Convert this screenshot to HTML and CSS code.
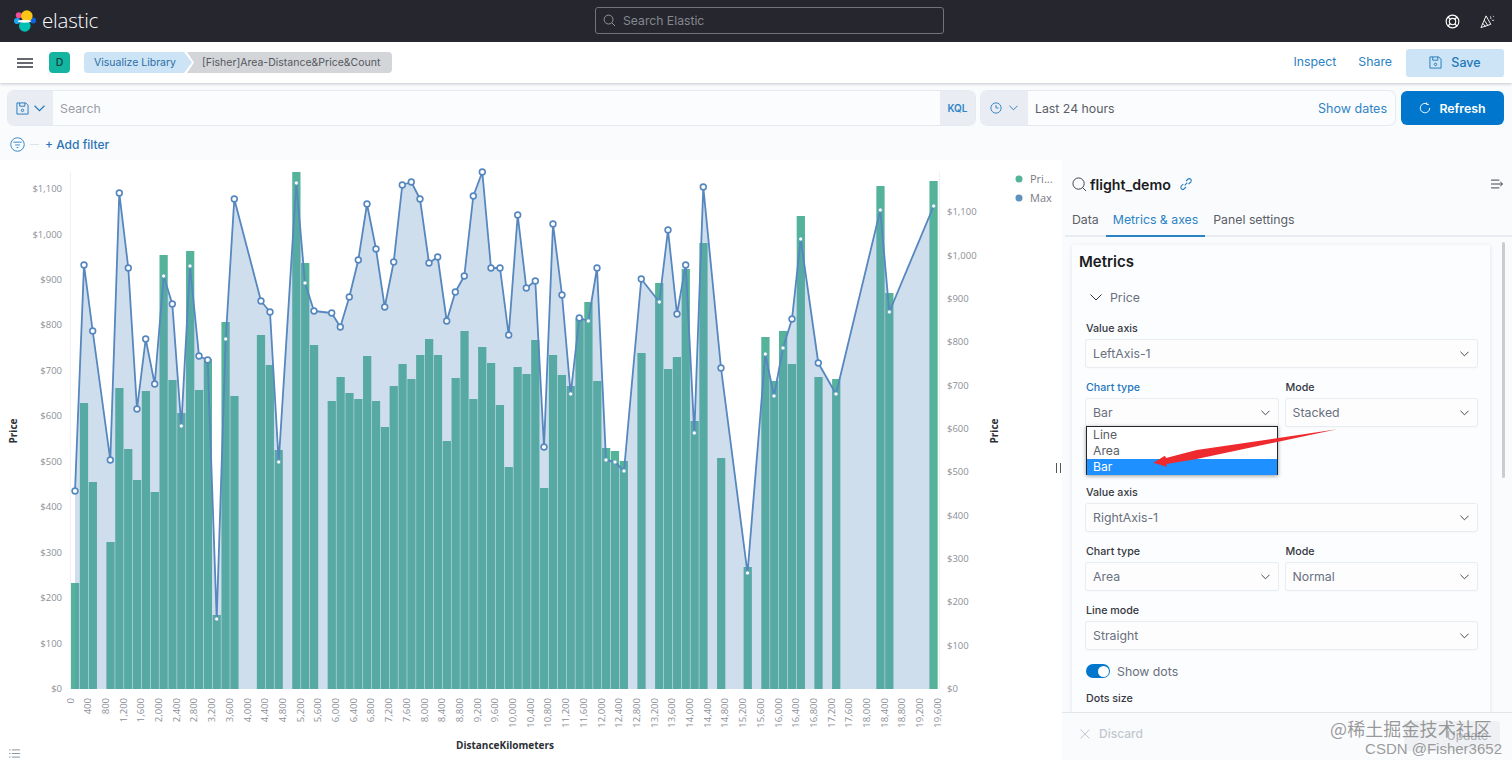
FILE: index.html
```html
<!DOCTYPE html>
<html lang="en">
<head>
<meta charset="utf-8">
<title>Visualize Library - Elastic</title>
<link rel="stylesheet" href="styles.css">
</head>
<body>
<header class="topbar">
  <div class="brand">
    <svg class="logo" viewBox="0 0 22 22" width="22" height="22">
      <circle cx="4.8" cy="5.2" r="3" fill="#f04e98"/>
      <circle cx="3" cy="11" r="3" fill="#1ba9f5"/>
      <circle cx="19" cy="10.5" r="3" fill="#0b64dd"/>
      <circle cx="10.8" cy="16" r="5.8" fill="#00bfb3"/>
      <circle cx="12.8" cy="6" r="5.8" fill="#fec514"/>
      <ellipse cx="10.5" cy="11.2" rx="6.8" ry="1.5" fill="#fff"/>
    </svg>
    <span class="wordmark">elastic</span>
  </div>
  <div class="globalsearch">
    <svg viewBox="0 0 14 14" width="13" height="13"><circle cx="6" cy="6" r="4.8" fill="none" stroke="#9a9da3"/><path d="M9.5 9.5l3.5 3.5" stroke="#9a9da3"/></svg>
    <span>Search Elastic</span>
  </div>
  <div class="topicons">
    <svg viewBox="0 0 16 16" width="15" height="15"><circle cx="8" cy="8" r="6.8" fill="none" stroke="#fff" stroke-width="1.2"/><circle cx="8" cy="8" r="3.4" fill="none" stroke="#fff" stroke-width="1.2"/><path d="M3.2 3.2l2.4 2.4M12.8 3.2l-2.4 2.4M3.2 12.8l2.4-2.4M12.8 12.8l-2.4-2.4" stroke="#fff" stroke-width="1.2"/></svg>
    <svg viewBox="0 0 16 16" width="15" height="15"><path d="M6.5 2L1 14.5 11.5 11zM4.5 6.5l4 6M3 10l3 3.5" fill="none" stroke="#fff"/><path d="M11 2.5c1 1 0 2 1 3M13 7l2-.5M14 2l.5 1" fill="none" stroke="#fff" stroke-width=".9"/></svg>
  </div>
</header>

<nav class="navbar">
  <svg class="burger" viewBox="0 0 16 10" width="16" height="10"><path d="M0 1h16M0 5h16M0 9h16" stroke="#343741" stroke-width="1.5"/></svg>
  <span class="avatar">D</span>
  <div class="crumbs">
    <span class="crumb crumb-blue">Visualize Library</span>
    <span class="crumb crumb-grey">[Fisher]Area-Distance&amp;Price&amp;Count</span>
  </div>
  <div class="navactions">
    <a class="navlink">Inspect</a>
    <a class="navlink">Share</a>
    <button class="savebtn">
      <svg viewBox="0 0 14 14" width="13" height="13"><path d="M1 1h9.5L13 3.5V13H1z M4 1v3.5h5.5V1" fill="none" stroke="#1f77bb"/><circle cx="7" cy="9" r="1.3" fill="none" stroke="#1f77bb"/></svg>
      Save
    </button>
  </div>
</nav>

<section class="querybar">
  <div class="group searchgroup">
    <div class="prepend prepend-save">
      <svg viewBox="0 0 14 14" width="13" height="13"><path d="M1 1h9.5L13 3.5V13H1z M4 1v3.5h5.5V1" fill="none" stroke="#1f77bb"/><circle cx="7" cy="9" r="1.3" fill="none" stroke="#1f77bb"/></svg>
      <svg viewBox="0 0 10 6" width="11" height="7"><path d="M.5.5L5 5 9.5.5" fill="none" stroke="#1f77bb"/></svg>
    </div>
    <span class="queryinput">Search</span>
    <span class="kql">KQL</span>
  </div>
  <div class="group timegroup">
    <div class="prepend prepend-time">
      <svg viewBox="0 0 14 14" width="12" height="12"><circle cx="7" cy="7" r="6" fill="none" stroke="#1f77bb"/><path d="M7 3.5V7h3" fill="none" stroke="#1f77bb"/></svg>
      <svg viewBox="0 0 10 6" width="9" height="6"><path d="M.5.5L5 5 9.5.5" fill="none" stroke="#1f77bb"/></svg>
    </div>
    <span class="timetext">Last 24 hours</span>
    <a class="showdates">Show dates</a>
  </div>
  <button class="refresh">
    <svg viewBox="0 0 14 14" width="12" height="12"><path d="M9.5 2.2A5.5 5.5 0 1 0 12.5 7M9 .5v2.4h2.4" fill="none" stroke="#fff" stroke-width="1.1"/></svg>
    Refresh
  </button>
</section>

<div class="filterbar">
  <svg viewBox="0 0 16 16" width="15" height="15"><circle cx="8" cy="8" r="7.2" fill="none" stroke="#2f84c6"/><path d="M3.5 5.5h9M5.5 8.5h5M7 11.2h2" stroke="#2f84c6"/></svg>
  <span class="filterdash"></span>
  <a class="addfilter">+ Add filter</a>
</div>

<main class="workspace">
  <div class="chartarea">
    <svg id="chart" class="chart" viewBox="0 160 1062 600" width="1062" height="600"></svg>
    <svg class="listicon" viewBox="0 0 12 10" width="11" height="9"><path d="M0 1h1.5M3 1h9M0 5h1.5M3 5h9M0 9h1.5M3 9h9" stroke="#7b8a99"/></svg>
    <span class="resizer"></span>
  </div>

  <aside class="panel">
    <div class="paneltitle">
      <svg viewBox="0 0 16 16" width="15" height="15"><circle cx="7" cy="7" r="6" fill="none" stroke="#343741"/><path d="M11.3 11.3l3.7 3.7" stroke="#343741"/></svg>
      <strong>flight_demo</strong>
      <svg viewBox="0 0 16 16" width="14" height="14"><path d="M6.5 9.5l3-3M5 8L2.5 10.5a2.3 2.3 0 0 0 3.2 3.2L8 11.3M8 4.7l2.4-2.4a2.3 2.3 0 0 1 3.2 3.2L11 8" fill="none" stroke="#1f77bb" stroke-width="1.2"/></svg>
      <svg class="collapse" viewBox="0 0 14 10" width="13" height="10"><path d="M0 .8h9M0 5h12M0 9.2h9M10 2.8L12.5 5 10 7.2" fill="none" stroke="#343741"/></svg>
    </div>
    <div class="tabs">
      <span class="tab">Data</span>
      <span class="tab tab-active">Metrics &amp; axes</span>
      <span class="tab">Panel settings</span>
    </div>
    <div class="panelbody">
      <div class="card">
        <h3 class="cardtitle">Metrics</h3>
        <div class="accordion">
          <svg viewBox="0 0 12 7" width="12" height="7"><path d="M.5.5L6 6 11.5.5" fill="none" stroke="#343741"/></svg>
          <span>Price</span>
        </div>
        <div class="field field-first">
          <label class="label">Value axis</label>
          <div class="select">LeftAxis-1<svg class="chev" viewBox="0 0 10 6" width="9" height="6"><path d="M.5.5L5 5 9.5.5" fill="none" stroke="#343741"/></svg></div>
        </div>
        <div class="fieldrow">
          <div class="field">
            <label class="label label-active">Chart type</label>
            <div class="select select-open">Bar<svg class="chev" viewBox="0 0 10 6" width="9" height="6"><path d="M.5.5L5 5 9.5.5" fill="none" stroke="#343741"/></svg>
              <ul class="options">
                <li>Line</li>
                <li>Area</li>
                <li class="option-on">Bar</li>
              </ul>
            </div>
          </div>
          <div class="field">
            <label class="label">Mode</label>
            <div class="select">Stacked<svg class="chev" viewBox="0 0 10 6" width="9" height="6"><path d="M.5.5L5 5 9.5.5" fill="none" stroke="#343741"/></svg></div>
          </div>
        </div>
        <div class="spacer"></div>
        <div class="field">
          <label class="label">Value axis</label>
          <div class="select">RightAxis-1<svg class="chev" viewBox="0 0 10 6" width="9" height="6"><path d="M.5.5L5 5 9.5.5" fill="none" stroke="#343741"/></svg></div>
        </div>
        <div class="fieldrow">
          <div class="field">
            <label class="label">Chart type</label>
            <div class="select">Area<svg class="chev" viewBox="0 0 10 6" width="9" height="6"><path d="M.5.5L5 5 9.5.5" fill="none" stroke="#343741"/></svg></div>
          </div>
          <div class="field">
            <label class="label">Mode</label>
            <div class="select">Normal<svg class="chev" viewBox="0 0 10 6" width="9" height="6"><path d="M.5.5L5 5 9.5.5" fill="none" stroke="#343741"/></svg></div>
          </div>
        </div>
        <div class="field">
          <label class="label">Line mode</label>
          <div class="select">Straight<svg class="chev" viewBox="0 0 10 6" width="9" height="6"><path d="M.5.5L5 5 9.5.5" fill="none" stroke="#343741"/></svg></div>
        </div>
        <div class="switchrow">
          <span class="switch"><span class="knob"></span></span>
          <span>Show dots</span>
        </div>
        <div class="field">
          <label class="label">Dots size</label>
        </div>
      </div>
      <div class="scrollthumb"></div>
    </div>
    <footer class="panelfoot">
      <span class="discard">
        <svg viewBox="0 0 10 10" width="10" height="10"><path d="M.5.5l9 9M9.5.5l-9 9" stroke="#c2c7cf"/></svg>
        Discard
      </span>
      <span class="update">Update</span>
    </footer>
  </aside>
</main>

<svg class="annotation" viewBox="0 0 200 50" width="200" height="50">
  <polygon points="185,.3 44.7,21 14,29 13,26.7 1.3,33.7 14.7,37.7 14.5,35 44.7,30" fill="#ee2a2e"/>
</svg>
<div class="watermark">
  <span class="wm-cn">@稀土掘金技术社区</span>
  <span class="wm-en">CSDN @Fisher3652</span>
</div>
<script src="chart.js"></script>
</body>
</html>
```
FILE: styles.css
```css
* { box-sizing: border-box; }
html, body { margin: 0; height: 760px; overflow: hidden; }
body {
  position: relative;
  display: flex;
  flex-direction: column;
  font-family: Inter, "Noto Sans", sans-serif;
  font-size: 12.3px;
  color: #69707d;
  background: #fafbfd;
}

.topbar {
  flex: none;
  height: 42px;
  display: grid;
  grid-template-columns: 581px 349px 1fr;
  align-items: center;
  background: #25262e;
  padding: 0 4px 0 14px;
}
.brand { display: flex; align-items: center; gap: 6px; }
.logo { display: block; }
.wordmark { font-family: "Open Sans", sans-serif; font-size: 20.5px; font-weight: 300; color: #fff; position: relative; top: -1px; letter-spacing: -.2px; }
.globalsearch {
  height: 27px;
  margin-top: -1px;
  border: 1px solid #70737a;
  border-radius: 3px;
  display: flex;
  align-items: center;
  gap: 7px;
  padding-left: 7px;
  color: #85888e;
  font-size: 12.2px;
  background: #25262e;
}
.topicons { display: flex; justify-content: flex-end; gap: 20px; padding-right: 13px; }
.topicons svg { display: block; }

.navbar {
  flex: none;
  height: 41px;
  display: flex;
  align-items: center;
  background: #fff;
  box-shadow: 0 1px 3px rgba(90, 100, 115, .35);
  padding: 0 8px 0 17px;
  position: relative;
}
.burger { flex: none; }
.avatar {
  flex: none;
  width: 21px;
  height: 21px;
  margin-left: 16px;
  border-radius: 4px;
  background: #13b5a0;
  color: #123a40;
  font-size: 10.5px;
  font-weight: 500;
  display: flex;
  align-items: center;
  justify-content: center;
}
.crumbs { display: flex; margin-left: 14px; font-size: 10.5px; }
.crumb { height: 21px; display: flex; align-items: center; }
.crumb-blue {
  background: #cce4f5;
  color: #2c6ea6;
  padding: 0 14px 0 10px;
  width: 108px;
  white-space: nowrap;
  clip-path: polygon(0 0, 100px 0, 108px 50%, 100px 100%, 0 100%);
  border-radius: 4px 0 0 4px;
}
.crumb-grey {
  background: #d3d5d9;
  color: #55585d;
  margin-left: -5px;
  padding: 0 10px 0 15px;
  width: 205px;
  white-space: nowrap;
  border-radius: 0 4px 4px 0;
  clip-path: polygon(0 0, 100% 0, 100% 100%, 0 100%, 7px 50%);
}
.navactions { margin-left: auto; display: flex; align-items: center; }
.navlink { color: #2b82c4; font-size: 12.3px; margin-right: 22px; position: relative; top: -1px; }
.navlink:nth-child(2) { margin-right: 14px; }
.savebtn {
  width: 98px;
  height: 28px;
  border: 0;
  border-radius: 3px;
  background: #cce4f5;
  color: #1f77bb;
  font: 500 12.5px Inter, sans-serif;
  display: flex;
  align-items: center;
  justify-content: center;
  gap: 9px;
}

.querybar {
  flex: none;
  margin-top: 8px;
  height: 34px;
  padding: 0 8px;
  display: flex;
  gap: 6px;
}
.group {
  display: flex;
  align-items: stretch;
  background: #fbfcfd;
  border-radius: 6px;
  box-shadow: 0 0 0 1px #e6e9ef;
  overflow: hidden;
}
.searchgroup { width: 967px; }
.timegroup { width: 414px; }
.prepend { flex: none; background: #e9edf3; display: flex; align-items: center; }
.prepend-save { width: 45px; gap: 5px; padding-left: 8px; }
.prepend-time { width: 47px; gap: 7px; padding-left: 9px; }
.queryinput { flex: 1; display: flex; align-items: center; padding-left: 7px; color: #9a9ea6; }
.kql { flex: none; width: 35px; background: #e9edf3; color: #2f84c6; font-size: 10px; font-weight: 600; display: flex; align-items: center; justify-content: center; }
.timetext { display: flex; align-items: center; padding-left: 7px; color: #5a5e66; }
.showdates { margin-left: auto; padding-right: 8px; display: flex; align-items: center; color: #2f84c6; font-size: 12.5px; }
.refresh {
  flex: none;
  width: 103px;
  border: 0;
  border-radius: 6px;
  background: #0077cc;
  color: #fff;
  font: 600 12.3px Inter, sans-serif;
  display: flex;
  align-items: center;
  justify-content: center;
  gap: 8px;
}

.filterbar { flex: none; height: 35px; padding: 3px 0 0 10px; display: flex; align-items: center; }
.filterbar svg { display: block; }
.filterdash { width: 9px; height: 1px; background: #dfe3e8; margin: 0 6px 0 5px; }
.addfilter { color: #2b74b4; font-weight: 500; font-size: 12px; }

.workspace { flex: 1; min-height: 0; display: flex; }
.chartarea { flex: none; width: 1062px; position: relative; background: #fff; }
.chart { display: block; font-family: "Open Sans", sans-serif; }
.listicon { position: absolute; left: 9px; bottom: 2px; }
.resizer { position: absolute; left: 1056px; top: 303px; width: 5px; height: 10px; border-left: 1.5px solid #555; border-right: 1.5px solid #555; }

.bar { fill: #54b399; }
.area { fill: #6092c0; fill-opacity: .3; }
.line { fill: none; stroke: #5687bf; stroke-width: 1.8; stroke-linejoin: round; }
.dot { fill: #fff; stroke: #5687bf; stroke-width: 1.6; }
.dot-small { fill: #fff; stroke: #5a9fb8; stroke-width: .8; }
.tick { font-size: 9.5px; fill: #8c9097; }
.axistitle { font-size: 10px; font-weight: 700; fill: #2c2f36; }
.axisline { stroke: #eef0f3; stroke-width: 1; }
.legendtext { font-size: 11px; fill: #777b83; }

.panel { flex: none; width: 450px; display: flex; flex-direction: column; min-height: 0; background: #fafbfd; }
.paneltitle { flex: none; height: 47px; display: flex; align-items: center; padding: 1px 8px 0 10px; gap: 3px; }
.paneltitle svg { flex: none; display: block; }
.paneltitle strong { color: #1a1c21; font-size: 14.2px; font-weight: 600; margin-right: 5px; }
.collapse { margin-left: auto; }
.tabs { flex: none; height: 30px; margin-left: 3px; display: flex; border-bottom: 2px solid #e8ecf1; }
.tab { padding: 0 7px 3px; display: flex; align-items: center; color: #5a5e66; margin-bottom: -2px; border-bottom: 2px solid transparent; }
.tab:last-child { margin-left: 1px; }
.tab-active { color: #2b82c4; border-bottom-color: #2b82c4; }
.panelbody { flex: 1; min-height: 0; overflow: hidden; display: flex; align-items: flex-start; padding: 8px 0 0 10px; }
.card {
  flex: none;
  width: 418px;
  height: 600px;
  background: #fcfdfe;
  box-shadow: 0 1px 4px rgba(100, 110, 130, .18);
  padding: 7px 13px 0 7px;
}
.cardtitle { margin: 0; color: #1a1c21; font-size: 15px; line-height: 20px; font-weight: 600; }
.accordion { height: 20px; margin-top: 15px; padding-left: 11px; display: flex; align-items: center; gap: 8px; color: #69707d; }
.accordion svg { flex: none; }
.field { margin-top: 14px; flex: 1; min-width: 0; }
.card > .field-first { margin-top: 15px; }
.fieldrow { display: flex; gap: 8px; }
.label { display: block; height: 14px; line-height: 14px; font-size: 10.7px; font-weight: 500; color: #343741; }
.label-active { color: #1f77bb; }
.card > .field, .card > .fieldrow, .spacer, .switchrow { margin-left: 7px; }
.select {
  position: relative;
  height: 27px;
  margin-top: 4px;
  padding-left: 7px;
  display: flex;
  align-items: center;
  background: #fdfdfe;
  border-radius: 2px;
  box-shadow: 0 0 0 1px #e9edf2, 0 1px 2px rgba(100, 110, 130, .1);
  color: #69707d;
}
.chev { position: absolute; right: 8px; top: 11px; }
.select-open { box-shadow: 0 0 0 1px #e9edf2; }
.options {
  position: absolute;
  z-index: 3;
  left: 0;
  right: 0;
  top: 27px;
  margin: 0;
  padding: 0;
  list-style: none;
  background: #fff;
  border: 1px solid #23262c;
  border-bottom: 0;
  box-shadow: 0 1px 4px rgba(0, 0, 0, .4);
}
.options li { height: 16px; line-height: 16px; padding-left: 6px; color: #5a5e66; font-size: 12.2px; }
.options .option-on { background: #1e90ff; color: #fff; }
.spacer { height: 46px; }
.switchrow { display: flex; align-items: center; gap: 7px; height: 14px; margin-top: 15px; color: #69707d; }
.switch { width: 24px; height: 14px; border-radius: 7px; background: #0077cc; display: block; position: relative; }
.knob { position: absolute; right: 1px; top: 1.5px; width: 11px; height: 11px; border-radius: 50%; background: #fff; }
.scrollthumb { flex: none; width: 3px; height: 236px; margin: -3px 0 0 12px; background: #c9ccd1; border-radius: 2px; }
.panelfoot {
  flex: none;
  height: 48px;
  padding: 0 12px 6px 18px;
  border-top: 1px solid #e2e5ea;
  background: #fafbfd;
  display: flex;
  align-items: center;
  justify-content: space-between;
}
.discard { display: flex; align-items: center; gap: 9px; color: #c2c7cf; font-weight: 500; font-size: 12px; }
.update { width: 96px; height: 30px; margin-top: 4px; border-radius: 3px; background: #eef0f3; color: #a8abb1; font-size: 12px; display: flex; align-items: center; justify-content: flex-end; padding-right: 12px; }

.annotation { position: absolute; left: 1152px; top: 429px; z-index: 5; }
.watermark { position: absolute; left: 1330px; top: 717px; z-index: 5; width: 172px; display: flex; flex-direction: column; align-items: flex-end; font-family: "Noto Sans CJK SC", "Noto Sans", sans-serif; color: rgba(130, 130, 130, .8); }
.wm-cn { font-size: 18px; line-height: 23px; align-self: flex-start; letter-spacing: .1px; color: rgba(120, 120, 120, .75); }
.wm-en { font-size: 15px; line-height: 18px; font-family: "Liberation Sans", sans-serif; }
```
FILE: chart.js
```js
var NS = 'http://www.w3.org/2000/svg';
var svg = document.getElementById('chart');
var BASE = 689, X0 = 71, PITCH = 8.85, BAR = 8.25;

var bars = [583,403,482,null,542,388,449,480,391,492,255,380,413,251,390,359,615,322,396,null,null,335,365,450,null,172,263,345,null,401,377,393,399,356,401,427,386,364,379,355,339,355,441,378,331,399,347,363,405,467,367,374,340,488,355,375,386,318,302,381,448,451,461,null,353,null,283,369,357,269,421,243,null,458,null,null,567,null,337,381,331,364,216,null,377,null,379,null,null,null,null,186,293,null,null,null,null,181];

var pts = [[75,491],[84,265],[92.7,331],[110.3,460],[119.3,193],[128.3,268],[137,409],[145.7,339],[154.7,384],[163.7,276],[172.3,304],[181.3,426],[190,266],[199,356],[207.7,360],[216.7,619],[225.7,339],[234.3,199],[261,301],[270,312],[278.7,462],[296.3,183],[305,283],[314,311],[331.7,313],[340.3,327],[349.3,297],[358.3,260],[367,204],[376,249],[384.7,307],[393.7,262],[402.3,185],[411.3,182],[420,199],[429,263],[437.7,257],[446.7,321],[455.3,292],[464.3,276],[473.3,196],[482.3,172],[491,268],[500,268],[508.7,335],[517.7,215],[526.3,288],[535.3,281],[544,447],[553,224],[562,295],[570.7,394],[579.3,318],[588.3,321],[597,268],[606,460],[615,462],[624,471],[641.3,279],[659.3,302],[668,230],[677,314],[685.7,265],[694.3,433],[703.3,187],[721,368],[747.5,573],[765.3,354],[774,396],[783,348],[792,319],[800.7,239],[818.3,363],[836,394],[880.3,210],[889.3,312],[933.7,206]];

function el(name, attrs, text) {
  var n = document.createElementNS(NS, name);
  for (var k in attrs) n.setAttribute(k, attrs[k]);
  if (text !== undefined) n.textContent = text;
  svg.appendChild(n);
  return n;
}
function money(v) { return '$' + v.toLocaleString('en-US'); }

el('line', {x1: 70.5, y1: 172, x2: 70.5, y2: 689, 'class': 'axisline'});
el('line', {x1: 939.5, y1: 172, x2: 939.5, y2: 689, 'class': 'axisline'});

bars.forEach(function (top, i) {
  if (top === null) return;
  el('rect', {x: (X0 + i * PITCH).toFixed(2), y: top, width: BAR, height: BASE - top, 'class': 'bar'});
});

var areaPts = pts.slice(0, -1).concat([[930, 213]]);
var d = 'M75 ' + BASE + areaPts.map(function (p) { return 'L' + p[0] + ' ' + p[1]; }).join('') + 'L930 ' + BASE + 'Z';
el('path', {d: d, 'class': 'area'});
el('polyline', {points: pts.map(function (p) { return p.join(','); }).join(' '), 'class': 'line'});

pts.forEach(function (p) {
  var idx = Math.round((p[0] - 4.1 - X0) / PITCH);
  var top = bars[idx];
  var over = top !== null && top !== undefined && top < p[1] - 1;
  el('circle', {cx: p[0], cy: p[1], r: over ? 2.1 : 2.9, 'class': over ? 'dot-small' : 'dot'});
});

for (var v = 0; v <= 1100; v += 100) {
  el('text', {x: 62, y: 689 - v * 0.4545 + 3, 'text-anchor': 'end', 'class': 'tick'}, money(v));
  el('text', {x: 947, y: 689 - v * 0.4335 + 3, 'class': 'tick'}, money(v));
}
for (var km = 0, j = 0; km <= 19600; km += 400, j++) {
  var lx = 73.5 + j * 17.7;
  el('text', {x: lx, y: 698, 'text-anchor': 'end', 'class': 'tick', transform: 'rotate(-90 ' + lx + ' 698)'}, km.toLocaleString('en-US'));
}

el('text', {x: 17, y: 431, 'text-anchor': 'middle', 'class': 'axistitle', transform: 'rotate(-90 17 431)'}, 'Price');
el('text', {x: 998, y: 431, 'text-anchor': 'middle', 'class': 'axistitle', transform: 'rotate(-90 998 431)'}, 'Price');
el('text', {x: 505, y: 749, 'text-anchor': 'middle', 'class': 'axistitle'}, 'DistanceKilometers');

el('circle', {cx: 1019, cy: 179, r: 3.5, fill: '#54b399'});
el('text', {x: 1030, y: 183, 'class': 'legendtext'}, 'Pri...');
el('circle', {cx: 1019, cy: 198, r: 3.5, fill: '#6092c0'});
el('text', {x: 1030, y: 202, 'class': 'legendtext'}, 'Max');
```
